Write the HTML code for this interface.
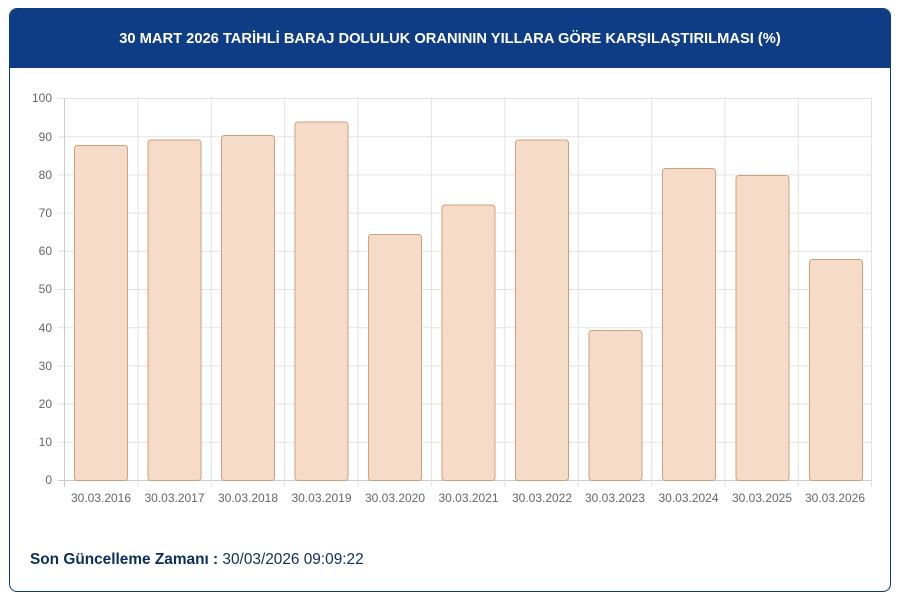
<!DOCTYPE html>
<html><head><meta charset="utf-8"><style>
body{margin:0;background:#fff;width:899px;height:601px;overflow:hidden;font-family:"Liberation Sans",sans-serif}
.card{position:absolute;left:9px;top:8px;width:882px;height:584px;border:1px solid #0d3b74;border-radius:8px;overflow:hidden;box-sizing:border-box}
.hd{height:59px;background:#0e3d86;color:#fff;font-weight:bold;font-size:14.7px;text-align:center;line-height:60px}
.ft{position:absolute;left:20px;top:542px;font-size:15.4px;color:#0d2d5c}
</style></head><body>
<div class="card"><div class="hd">30 MART 2026 TARİHLİ BARAJ DOLULUK ORANININ YILLARA GÖRE KARŞILAŞTIRILMASI (%)</div>
<div class="ft"><b>Son Güncelleme Zamanı :</b> 30/03/2026 09:09:22</div></div>
<svg style="position:absolute;left:0;top:0" width="899" height="601" font-family="Liberation Sans,sans-serif" font-size="12" fill="#666">
<g stroke="#e3e3e3" stroke-width="1">
<line x1="58" y1="480.5" x2="871" y2="480.5" stroke="#ccc"/>
<line x1="58" y1="442.3" x2="871" y2="442.3"/><line x1="58" y1="404.1" x2="871" y2="404.1"/>
<line x1="58" y1="365.9" x2="871" y2="365.9"/><line x1="58" y1="327.7" x2="871" y2="327.7"/>
<line x1="58" y1="289.5" x2="871" y2="289.5"/><line x1="58" y1="251.3" x2="871" y2="251.3"/>
<line x1="58" y1="213.1" x2="871" y2="213.1"/><line x1="58" y1="174.9" x2="871" y2="174.9"/>
<line x1="58" y1="136.7" x2="871" y2="136.7"/><line x1="58" y1="98.5" x2="871" y2="98.5"/>
<line x1="64.5" y1="98" x2="64.5" y2="487" stroke="#ccc"/>
<line x1="137.9" y1="98" x2="137.9" y2="487"/><line x1="211.3" y1="98" x2="211.3" y2="487"/>
<line x1="284.6" y1="98" x2="284.6" y2="487"/><line x1="358" y1="98" x2="358" y2="487"/>
<line x1="431.4" y1="98" x2="431.4" y2="487"/><line x1="504.8" y1="98" x2="504.8" y2="487"/>
<line x1="578.2" y1="98" x2="578.2" y2="487"/><line x1="651.6" y1="98" x2="651.6" y2="487"/>
<line x1="724.9" y1="98" x2="724.9" y2="487"/><line x1="798.3" y1="98" x2="798.3" y2="487"/>
<line x1="871.5" y1="98" x2="871.5" y2="487"/>
</g>
<g fill="#f6dcc8" stroke="#d0a07c" stroke-width="1">
<rect x="74.5" y="145.5" width="53" height="335" rx="3"/>
<rect x="148" y="140" width="53" height="340.5" rx="3"/>
<rect x="221.5" y="135.5" width="53" height="345" rx="3"/>
<rect x="295" y="122" width="53" height="358.5" rx="3"/>
<rect x="368.5" y="234.5" width="53" height="246" rx="3"/>
<rect x="442" y="205" width="53" height="275.5" rx="3"/>
<rect x="515.5" y="140" width="53" height="340.5" rx="3"/>
<rect x="589" y="330.5" width="53" height="150" rx="3"/>
<rect x="662.5" y="168.5" width="53" height="312" rx="3"/>
<rect x="736" y="175.5" width="53" height="305" rx="3"/>
<rect x="809.5" y="259.5" width="53" height="221" rx="3"/>
</g>
<g text-anchor="end">
<text x="52" y="484">0</text><text x="52" y="446">10</text><text x="52" y="408">20</text><text x="52" y="370">30</text>
<text x="52" y="332">40</text><text x="52" y="293">50</text><text x="52" y="255">60</text><text x="52" y="217">70</text>
<text x="52" y="179">80</text><text x="52" y="141">90</text><text x="52" y="102">100</text>
</g>
<g text-anchor="middle">
<text x="101" y="502">30.03.2016</text><text x="174.5" y="502">30.03.2017</text><text x="248" y="502">30.03.2018</text>
<text x="321.5" y="502">30.03.2019</text><text x="395" y="502">30.03.2020</text><text x="468.5" y="502">30.03.2021</text>
<text x="542" y="502">30.03.2022</text><text x="615" y="502">30.03.2023</text><text x="688.5" y="502">30.03.2024</text>
<text x="762" y="502">30.03.2025</text><text x="835" y="502">30.03.2026</text>
</g>
</svg>
</body></html>
